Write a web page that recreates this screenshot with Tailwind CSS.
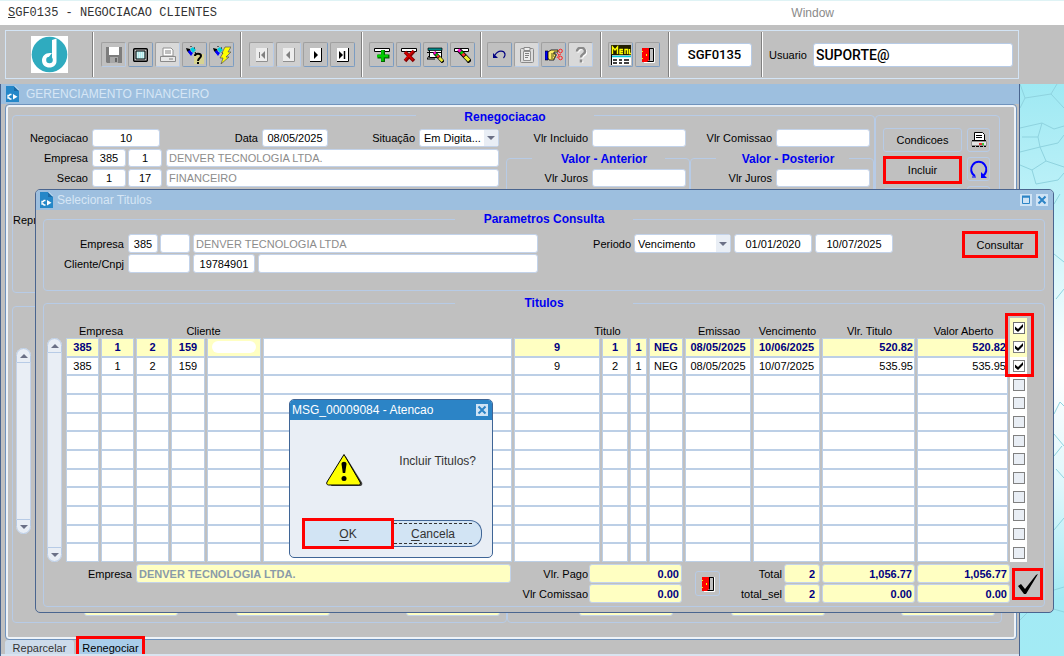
<!DOCTYPE html>
<html lang="pt-BR">
<head>
    <meta charset="UTF-8">
    <meta name="viewport" content="width=device-width, initial-scale=1.0">
    <title>SGF0135 - NEGOCIACAO CLIENTES</title>
    <script src="https://cdn.jsdelivr.net/npm/@tailwindcss/browser@4"></script>
</head>
<body class="relative flex h-screen flex-col overflow-hidden bg-[#a3ebf4] font-['Liberation_Sans',Arial,sans-serif] text-[11px] leading-[14px] text-black">

    <!-- Shared symbols -->
    <svg class="hidden">
        <symbol id="app-icon" viewBox="0 0 13 16">
            <path d="M0 0h8l5 5v11H0z" fill="#2487c8"/>
            <path d="M8 0l5 5H8z" fill="#1a6ba8"/>
            <path d="M8.500 0l4.500 4.500" stroke="#cfe6f7" stroke-width="1"/>
            <path d="M7 8l4.500 2.800L7 13.500z" fill="#fff"/>
            <path d="M5.500 8.500H4l-.8 1H2v2.500h1.200l.8 1h1.500" fill="none" stroke="#fff" stroke-width="1.300"/>
        </symbol>
        <symbol id="door" viewBox="0 0 14 16">
            <path d="M13.500 1v14.500H3" stroke="#fff" fill="none"/>
            <path d="M1.500 1.500h11v13h-11z" fill="#c0c0c0" stroke="#000"/>
            <path d="M1 1h7v12l-2 2H1z" fill="#f00"/>
            <path d="M8.500 1v12.500" stroke="#000"/>
            <path d="M5 7h1v2H5zM1 4h1v1H1zM1 11h1v1H1z" fill="#ff0"/>
        </symbol>
        <symbol id="up" viewBox="0 0 8 4"><path d="M0 4L4 0l4 4z" fill="#6b7086"/></symbol>
        <symbol id="down" viewBox="0 0 8 4"><path d="M0 0l4 4 4-4z" fill="#6b7086"/></symbol>
        <symbol id="flash" viewBox="0 0 10 10">
            <path d="M0 2l4 1 1 4-1 1-3-3z" fill="#000"/>
            <path d="M4 3l3-2 3 3-3 3z" fill="#0cd"/>
            <path d="M3 4l4 3-2 3-3-4z" fill="#00f"/>
            <path d="M4 0h2M9 6l1 2M8 2h1" stroke="#000"/>
        </symbol>
        <symbol id="pencil" viewBox="0 0 16 16">
            <path d="M3 2l10 10.500 2 2.500" stroke="#000" stroke-width="5"/>
            <path d="M2.500 1.500L5 4" stroke="#f0c" stroke-width="3"/>
            <path d="M5 4l2.500 2.500" stroke="#0c0" stroke-width="3"/>
            <path d="M7 6l2 2.300" stroke="#f33" stroke-width="3"/>
            <path d="M9.500 9L14 13.500" stroke="#ee3" stroke-width="3.500"/>
        </symbol>
        <symbol id="tick" viewBox="0 0 8 8"><path d="M0 2.500l3 2.500 5-5v3L3 8 0 5.500z" fill="#000"/></symbol>
        <symbol id="close" viewBox="0 0 12 12">
            <path d="M0 0h12v12H0z" fill="#cfe3f5"/>
            <path d="M2.500 2.500l7 7m0-7l-7 7" stroke="#2c84c6" stroke-width="2"/>
        </symbol>
    </svg>

    <!-- Desktop wallpaper -->
    <svg class="absolute top-[84px] right-0 h-[calc(100%-84px)] w-[54px]" viewBox="0 0 54 572" preserveAspectRatio="none">
        <defs>
            <linearGradient id="wall" x1="0" y1="0" x2="0" y2="1">
                <stop offset="0" stop-color="#9fe9f3"/><stop offset=".2" stop-color="#bdf1f8"/><stop offset=".5" stop-color="#ffffff"/>
                <stop offset=".7" stop-color="#dff7fb"/><stop offset=".9" stop-color="#a3eaf5"/><stop offset="1" stop-color="#a3ebf4"/>
            </linearGradient>
        </defs>
        <path d="M0 0h54v572H0z" fill="url(#wall)"/>
        <path d="M10 0l5 14 26-4 6-10M41 10l13 14M15 14l-5 10M10 44l22-5 12 6 10-3M12 53h16l4-14M28 53l2 10 18-4 6-8M10 68l20-5 6 14-14 9-12-5M36 77l18 6M22 86l4 14 22-4 6-7M44 120l6-10M44 170l10 8M46 215l8-10M44 330l6-12 4 4M44 350l10 12M44 372l8-10M46 385l8 9M44 446l10-12M10 536l16-16-2-22 20 8 10-3M24 498l-12-14M26 520l28 8M26 520l-6-16" fill="none" stroke="#8fd3df" stroke-width="1"/>
    </svg>

    <!-- Menu bar -->
    <header class="relative flex h-[25px] shrink-0 items-center border-t border-[#dff3f5] bg-white px-2">
        <h1 class="font-['Liberation_Mono',monospace] text-[12px] text-[#333]"><span class="underline">S</span>GF0135 - NEGOCIACAO CLIENTES</h1>
        <button class="mr-[222px] ml-auto text-[12px] text-[#8a8a8a]">Window</button>
    </header>

    <!-- Toolbar -->
    <div class="relative h-[59px] shrink-0 bg-[#c0c0c0] pt-[5px] pr-[45px] pl-[5px]">
        <div class="flex h-[49px] border border-[#d3e4f5] py-px">
            <div class="flex w-[87px] items-center justify-center border-r border-[#808080]">
                <svg class="h-[37px] w-[37px]" viewBox="0 0 37 37">
                    <path d="M0 0h37v37H0z" fill="#fff"/>
                    <circle cx="18.500" cy="18.500" r="17.800" fill="#2fabbf"/>
                    <path d="M21 4l4.500-1.500V25c0 4-3 6.500-7 6.500s-7.500-2.500-7.500-7c0-4 3-7.500 8-7.500 1.500 0 2 .2 2 .2z" fill="#fff"/>
                    <circle cx="18.500" cy="24" r="3.300" fill="#2fabbf"/>
                    <path d="M17 22l4-5v6z" fill="#2fabbf"/>
                </svg>
            </div>

            <div class="flex w-[148px] items-center gap-[2px] border-r border-l border-r-[#808080] border-l-white pl-[7px]">
                <button aria-label="Salvar" class="flex h-[25px] w-[25px] items-center justify-center rounded-[2px] border border-t-[#a0a0a0] border-r-[#b7cbe6] border-b-[#b7cbe6] border-l-[#a0a0a0]">
                    <svg class="h-4 w-4" viewBox="0 0 16 16"><path d="M0 0h16v16H1l-1-1z" fill="#7d7d7d"/><path d="M3 0h10v8H3z" fill="#fff"/><path d="M4 10h8v6H4z" fill="#a8a8a8"/><path d="M9 11h2v4H9z" fill="#666"/></svg>
                </button>
                <button aria-label="Tela" class="flex h-[25px] w-[25px] items-center justify-center rounded-[2px] border border-t-[#a0a0a0] border-r-[#7b9cc2] border-b-[#7b9cc2] border-l-[#a0a0a0]">
                    <svg class="h-[14px] w-[15px]" viewBox="0 0 15 14"><rect x=".7" y=".7" width="13.600" height="12.600" rx="1" fill="#c0c0c0" stroke="#000" stroke-width="1.400"/><path d="M3 3h9v8H3z" fill="#aee9ea" stroke="#000"/><path d="M4 5h7M4 7h7M4 9h7" stroke="#fff" stroke-dasharray="1 1"/></svg>
                </button>
                <button aria-label="Imprimir" class="flex h-[25px] w-[25px] items-center justify-center rounded-[2px] border border-t-[#a0a0a0] border-r-[#b7cbe6] border-b-[#b7cbe6] border-l-[#a0a0a0] bg-[#d9d9d9]">
                    <svg class="h-4 w-4" viewBox="0 0 16 16"><path d="M3 1h8l2 2v6H3z" fill="#fff" stroke="#909090"/><path d="M5 4h6M5 6h6" stroke="#808080"/><path d="M.5 9.500h15v5H.5z" fill="#e8e8e8" stroke="#8a8a8a"/><path d="M9 12h4" stroke="#808080"/></svg>
                </button>
                <button aria-label="Entrar consulta" class="flex h-[25px] w-[25px] items-center justify-center rounded-[2px] border border-t-[#a0a0a0] border-r-[#7b9cc2] border-b-[#7b9cc2] border-l-[#a0a0a0]">
                    <svg class="h-[18px] w-[18px]" viewBox="0 0 18 18"><use href="#flash" width="10" height="10"/><path d="M8 8h10v10H8z" fill="#e6e070" opacity=".6"/><path d="M9 10c0-3 6-3 6 0 0 2-3 2-3 5m0 1v2" fill="none" stroke="#000" stroke-width="2"/></svg>
                </button>
                <button aria-label="Executar consulta" class="flex h-[25px] w-[25px] items-center justify-center rounded-[2px] border border-t-[#a0a0a0] border-r-[#7b9cc2] border-b-[#7b9cc2] border-l-[#a0a0a0]">
                    <svg class="h-[18px] w-[18px]" viewBox="0 0 18 18"><use href="#flash" width="10" height="10"/><path d="M12 1h6l-3 5h3l-5 5h3l-8 7 2-6H7l3-5H9z" fill="#ff0" stroke="#555" stroke-width=".7"/></svg>
                </button>
            </div>

            <div class="flex w-[121px] items-center gap-[2px] border-r border-l border-r-[#808080] border-l-white pl-[7px]">
                <button aria-label="Primeiro" class="flex h-[25px] w-[25px] items-center justify-center rounded-[2px] border border-t-[#a0a0a0] border-r-[#b7cbe6] border-b-[#b7cbe6] border-l-[#a0a0a0] bg-[#d0d0d0]">
                    <svg class="h-[14px] w-[12px]" viewBox="0 0 12 14"><path d="M0 0h12v14H0z" fill="#ededed"/><path d="M11.500 0v13.500H0" fill="none" stroke="#909090"/><path d="M3.500 4v6" stroke="#808080"/><path d="M9 3v8L5 7z" fill="#808080"/></svg>
                </button>
                <button aria-label="Anterior" class="flex h-[25px] w-[25px] items-center justify-center rounded-[2px] border border-t-[#a0a0a0] border-r-[#b7cbe6] border-b-[#b7cbe6] border-l-[#a0a0a0] bg-[#d0d0d0]">
                    <svg class="h-[14px] w-[12px]" viewBox="0 0 12 14"><path d="M0 0h12v14H0z" fill="#ededed"/><path d="M11.500 0v13.500H0" fill="none" stroke="#909090"/><path d="M7 3v8L3 7z" fill="#808080"/></svg>
                </button>
                <button aria-label="Proximo" class="flex h-[25px] w-[25px] items-center justify-center rounded-[2px] border border-t-[#a0a0a0] border-r-[#7b9cc2] border-b-[#7b9cc2] border-l-[#a0a0a0]">
                    <svg class="h-[14px] w-[12px]" viewBox="0 0 12 14"><path d="M0 0h12v14H0z" fill="#fff"/><path d="M11.500 0v13.500H0" fill="none" stroke="#000"/><path d="M4 3v8l4-4z" fill="#000"/></svg>
                </button>
                <button aria-label="Ultimo" class="flex h-[25px] w-[25px] items-center justify-center rounded-[2px] border border-t-[#a0a0a0] border-r-[#7b9cc2] border-b-[#7b9cc2] border-l-[#a0a0a0]">
                    <svg class="h-[14px] w-[12px]" viewBox="0 0 12 14"><path d="M0 0h12v14H0z" fill="#fff"/><path d="M11.500 0v13.500H0" fill="none" stroke="#000"/><path d="M2 3v8l4-4z" fill="#000"/><path d="M7.500 3v8" stroke="#000" stroke-width="1.500"/></svg>
                </button>
            </div>

            <div class="flex w-[119px] items-center gap-[2px] border-r border-l border-r-[#808080] border-l-white pl-[6px]">
                <button aria-label="Inserir" class="flex h-[25px] w-[25px] items-center justify-center rounded-[2px] border border-t-[#a0a0a0] border-r-[#7b9cc2] border-b-[#7b9cc2] border-l-[#a0a0a0]">
                    <svg class="h-4 w-4" viewBox="0 0 16 16"><path d="M.5 1.500h15v3H.5z" fill="#fff" stroke="#000"/><path d="M9 3v12M3.500 9.500h12" stroke="#060" stroke-width="4"/><path d="M8.500 3v11M3 9h11" stroke="#0c0" stroke-width="2.500"/></svg>
                </button>
                <button aria-label="Remover" class="flex h-[25px] w-[25px] items-center justify-center rounded-[2px] border border-t-[#a0a0a0] border-r-[#7b9cc2] border-b-[#7b9cc2] border-l-[#a0a0a0]">
                    <svg class="h-4 w-4" viewBox="0 0 16 16"><path d="M.5 1.500h15v3H.5z" fill="#fff" stroke="#000"/><path d="M4 5l9 9M13 4l-9 10" stroke="#800" stroke-width="3.500"/><path d="M4 5l8 8M12 4l-8 9" stroke="#d00" stroke-width="1.500"/></svg>
                </button>
                <button aria-label="Limpar bloco" class="flex h-[25px] w-[25px] items-center justify-center rounded-[2px] border border-t-[#a0a0a0] border-r-[#7b9cc2] border-b-[#7b9cc2] border-l-[#a0a0a0]">
                    <svg class="h-4 w-[17px]" viewBox="0 0 17 16"><path d="M2.500 1.500h12v9h-12z" fill="#fff" stroke="#000"/><path d="M1 1h14v2.500H1z" fill="#088" stroke="#000" stroke-width=".7"/><path d="M0 5.500h14M2 9l-2 3h8" stroke="#000" fill="none"/><use href="#pencil" x="5" y="4" width="12" height="12"/></svg>
                </button>
                <button aria-label="Limpar registro" class="flex h-[25px] w-[25px] items-center justify-center rounded-[2px] border border-t-[#a0a0a0] border-r-[#7b9cc2] border-b-[#7b9cc2] border-l-[#a0a0a0]">
                    <svg class="h-[17px] w-[17px]" viewBox="0 0 17 17"><path d="M.5 2.500h14v3H.5z" fill="#fff" stroke="#000"/><use href="#pencil" x="2" y="2" width="15" height="15"/></svg>
                </button>
            </div>

            <div class="flex w-[120px] items-center gap-[2px] border-r border-l border-r-[#808080] border-l-white pl-[5px]">
                <button aria-label="Desfazer" class="flex h-[25px] w-[25px] items-center justify-center rounded-[2px] border border-t-[#a0a0a0] border-r-[#7b9cc2] border-b-[#7b9cc2] border-l-[#a0a0a0]">
                    <svg class="h-[9px] w-[13px]" viewBox="0 0 13 9"><path d="M2 5c3-5 9-5 10-1 .3 2-.5 3-1.500 4" fill="none" stroke="#000080" stroke-width="1.200"/><path d="M0 3v5h5z" fill="#000080"/></svg>
                </button>
                <button aria-label="Colar" class="flex h-[25px] w-[25px] items-center justify-center rounded-[2px] border border-t-[#a0a0a0] border-r-[#b7cbe6] border-b-[#b7cbe6] border-l-[#a0a0a0] bg-[#d9d9d9]">
                    <svg class="h-4 w-[14px]" viewBox="0 0 14 16"><rect x=".5" y="1.500" width="13" height="14" rx="1" fill="#ddd" stroke="#8a8a8a"/><path d="M4 .5h6v3H4z" fill="#eee" stroke="#8a8a8a"/><path d="M3.500 4.500h7v9h-7z" fill="#eee" stroke="#909090"/><path d="M5 6.500h4M5 8.500h4M5 10.500h3" stroke="#808080"/></svg>
                </button>
                <button aria-label="Selecionar" class="flex h-[25px] w-[25px] items-center justify-center rounded-[2px] border border-t-[#a0a0a0] border-r-[#7b9cc2] border-b-[#7b9cc2] border-l-[#a0a0a0]">
                    <svg class="h-[14px] w-[18px]" viewBox="0 0 18 14"><path d="M0 3h3v9H0z" fill="#00f" stroke="#000" stroke-width=".6"/><path d="M3 4l3-2h7v2H9v2h2v2h-1v2H9v2H4l-1-2z" fill="#fe6" stroke="#000" stroke-width=".8"/><path d="M6 6h3M6 8h3M6 10h2" stroke="#000" stroke-width=".7"/><path d="M12 5l2 2 2-1M12 10l2-3" stroke="#f33" fill="none"/><circle cx="15.500" cy="3" r="1.800" stroke="#f22" fill="none"/><circle cx="15.500" cy="10" r="1.800" stroke="#f22" fill="none"/></svg>
                </button>
                <button aria-label="Ajuda" class="flex h-[25px] w-[25px] items-center justify-center rounded-[2px] border border-t-[#a0a0a0] border-r-[#b7cbe6] border-b-[#b7cbe6] border-l-[#a0a0a0] bg-[#d9d9d9]">
                    <svg class="h-4 w-3" viewBox="0 0 12 16"><path d="M3 5.500c0-5 8-5 8 0 0 3-4 2-4 6m0 2v3" fill="none" stroke="#fff" stroke-width="2.500"/><path d="M2 4.500c0-5 8-5 8 0 0 3-4 2-4 6m0 2v3" fill="none" stroke="#8a8a8a" stroke-width="2.500"/></svg>
                </button>
            </div>

            <div class="flex w-[68px] items-center gap-[2px] border-r border-l border-r-[#808080] border-l-white pl-[6px]">
                <button aria-label="Menu" class="flex h-[25px] w-[25px] items-center justify-center rounded-[2px] border border-t-[#a0a0a0] border-r-[#7b9cc2] border-b-[#7b9cc2] border-l-[#a0a0a0]">
                    <svg class="h-5 w-5" viewBox="0 0 20 20"><path d="M0 0h20v10H0z" fill="#221f00"/><path d="M1.500 9V2L4 5l2.500-3v7M12 4.500H9v4h3M9 6.500h3M14 9V4.500h2.500V9M18.500 4v4.500H20" stroke="#ff0" fill="none" stroke-width="1.400"/><path d="M0 11h20v9H0z" fill="#fff"/><path d="M0 11.500h20" stroke="#0cd" stroke-width="1.500"/><path d="M2 15h4m2 0h3m2 0h5M2 18h4m2 0h3m2 0h5" stroke="#000" stroke-width="1.300"/><path d="M.5 10v10" stroke="#000"/></svg>
                </button>
                <button aria-label="Sair" class="flex h-[25px] w-[25px] items-center justify-center rounded-[2px] border border-t-[#a0a0a0] border-r-[#7b9cc2] border-b-[#7b9cc2] border-l-[#a0a0a0]">
                    <svg class="h-4 w-[14px]"><use href="#door"/></svg>
                </button>
            </div>

            <div class="flex w-[93px] items-center border-r border-l border-r-[#808080] border-l-white pl-[7px]">
                <input aria-label="Programa" value="SGF0135" class="h-6 w-[75px] rounded-[3px] border border-[#b7cbe6] bg-white text-center font-[Roboto,sans-serif] text-[13px] font-medium">
            </div>

            <div class="flex flex-1 items-center gap-[6px] border-l border-white pr-[5px] pl-[6px]">
                <label for="usuario">Usuario</label>
                <input id="usuario" value="SUPORTE@" class="h-6 min-w-0 flex-1 rounded-[3px] border border-[#b7cbe6] bg-white px-[2px] font-[Roboto,sans-serif] text-[14px] font-medium">
            </div>
        </div>
    </div>

    <!-- Main window -->
    <main class="relative mr-[44px] flex min-h-0 flex-1 flex-col border-x border-x-[#4a658f] bg-[#c0c0c0]">
        <div class="flex h-5 shrink-0 items-center gap-[7px] bg-[#9dbfdf] pl-[5px]">
            <svg class="h-4 w-[13px]"><use href="#app-icon"/></svg>
            <h2 class="text-[12px] text-[#d6e6f5]">GERENCIAMENTO FINANCEIRO</h2>
        </div>

        <div class="mr-[2px] ml-[4px] flex min-h-0 flex-1 flex-col rounded-[4px] border border-[#6f93bd] pt-[3px] pr-[14px] pl-[6px] shadow-[inset_0_0_0_2px_#eef3f8]">
            <div class="mr-[2px] flex">
                <fieldset class="h-[185px] min-w-0 flex-1 rounded-[4px] border border-[#b7cbe6]">
                    <legend class="ml-[403px] h-[14px] w-[178px] pt-[2px] text-[12px] font-bold text-[#0000f0]"><span class="block text-center">Renegociacao</span></legend>
                    <div class="flex pt-[7px]">
                        <div class="flex w-[486px] flex-col gap-[2px]">
                            <div class="flex items-center gap-1">
                                <label for="negociacao" class="w-[75px] text-right">Negociacao</label>
                                <input id="negociacao" value="10" class="h-[18px] w-[68px] rounded-[3px] border border-[#c3d3ea] bg-white text-center">
                                <label for="data" class="w-[94px] text-right">Data</label>
                                <input id="data" value="08/05/2025" class="h-[18px] w-[66px] rounded-[3px] border border-[#c3d3ea] bg-white text-center">
                                <label for="situacao" class="w-[83px] text-right">Situação</label>
                                <div class="relative flex-1">
                                    <select id="situacao" class="block h-[18px] w-full appearance-none rounded-[3px] border border-[#c3d3ea] bg-white pl-1"><option>Em Digita...</option></select>
                                    <span class="pointer-events-none absolute inset-y-px right-px flex w-[14px] items-center justify-center bg-[#e9eef5]"><svg class="h-1 w-2"><use href="#down"/></svg></span>
                                </div>
                            </div>
                            <div class="flex items-center gap-1">
                                <label for="emp1" class="w-[75px] text-right">Empresa</label>
                                <div class="flex gap-[2px]">
                                    <input id="emp1" value="385" class="h-[18px] w-[34px] rounded-[3px] border border-[#c3d3ea] bg-white text-center">
                                    <input aria-label="Filial" value="1" class="h-[18px] w-[34px] rounded-[3px] border border-[#c3d3ea] bg-white text-center">
                                </div>
                                <input aria-label="Nome da empresa" value="DENVER TECNOLOGIA LTDA." class="h-[18px] min-w-0 flex-1 rounded-[3px] border border-[#c3d3ea] bg-white px-[2px] text-[#8c8c8c]">
                            </div>
                            <div class="flex items-center gap-1">
                                <label for="secao" class="w-[75px] text-right">Secao</label>
                                <div class="flex gap-[2px]">
                                    <input id="secao" value="1" class="h-[18px] w-[34px] rounded-[3px] border border-[#c3d3ea] bg-white text-center">
                                    <input aria-label="Subsecao" value="17" class="h-[18px] w-[34px] rounded-[3px] border border-[#c3d3ea] bg-white text-center">
                                </div>
                                <input aria-label="Nome da secao" value="FINANCEIRO" class="h-[18px] min-w-0 flex-1 rounded-[3px] border border-[#c3d3ea] bg-white px-[2px] text-[#8c8c8c]">
                            </div>
                            <p class="pt-6">Representante</p>
                        </div>

                        <div class="ml-[7px] grid flex-1 grid-cols-2">
                            <div>
                                <div class="flex items-center justify-end gap-1 pr-1">
                                    <label for="vlr-incluido">Vlr Incluido</label>
                                    <input id="vlr-incluido" class="h-[18px] w-[94px] rounded-[3px] border border-[#c3d3ea] bg-white px-1">
                                </div>
                                <fieldset class="mt-1 h-[120px] rounded-[4px] border border-[#b7cbe6]">
                                    <legend class="mx-auto h-[14px] w-[133px] pl-3 pt-px text-center text-[12px] font-bold text-[#0000f0]">Valor - Anterior</legend>
                                    <div class="flex items-center justify-end gap-1 pt-[4px] pr-[3px]">
                                        <label for="juros-ant">Vlr Juros</label>
                                        <input id="juros-ant" class="h-[18px] w-[94px] rounded-[3px] border border-[#c3d3ea] bg-white px-1">
                                    </div>
                                </fieldset>
                            </div>
                            <div>
                                <div class="flex items-center justify-end gap-1 pr-1">
                                    <label for="vlr-comissao">Vlr Comissao</label>
                                    <input id="vlr-comissao" class="h-[18px] w-[94px] rounded-[3px] border border-[#c3d3ea] bg-white px-1">
                                </div>
                                <fieldset class="mt-1 h-[120px] rounded-[4px] border border-[#b7cbe6]">
                                    <legend class="mx-auto h-[14px] w-[133px] pl-3 pt-px text-center text-[12px] font-bold text-[#0000f0]">Valor - Posterior</legend>
                                    <div class="flex items-center justify-end gap-1 pt-[4px] pr-[3px]">
                                        <label for="juros-post">Vlr Juros</label>
                                        <input id="juros-post" class="h-[18px] w-[94px] rounded-[3px] border border-[#c3d3ea] bg-white px-1">
                                    </div>
                                </fieldset>
                            </div>
                        </div>
                    </div>
                </fieldset>

                <div class="mt-[7px] flex w-[125px] items-start gap-[5px] rounded-[4px] border border-[#b7cbe6] pt-[12px] pl-[7px]">
                    <div class="flex w-[79px] flex-col gap-[4px]">
                        <button class="h-6 rounded-[3px] border border-[#b7cbe6]">Condicoes</button>
                        <button class="h-7 border-[3px] border-[#f00]">Incluir</button>
                        <button aria-label="Excluir" class="h-6 rounded-[3px] border border-[#b7cbe6]"></button>
                    </div>
                    <div class="flex w-[23px] flex-col gap-[5px]">
                        <button aria-label="Imprimir negociacao" class="flex h-6 items-center justify-center rounded-[3px] border border-[#b7cbe6]">
                            <svg class="h-4 w-4" viewBox="0 0 16 16"><path d="M3.500 .5h8l2 2v6h-10z" fill="#fff" stroke="#000"/><path d="M5 3.500h6M5 5.500h6" stroke="#000"/><path d="M.5 9.500h15v4H.5z" fill="#e4e4e4" stroke="#909090"/><path d="M8 11h3v2H8z" fill="#e33"/><path d="M11 11h2v2h-2z" fill="#3c3"/><path d="M1 8.500h14" stroke="#000"/><path d="M1 14.500h14" stroke="#000" stroke-dasharray="3 1"/></svg>
                        </button>
                        <button aria-label="Atualizar" class="flex h-6 items-center justify-center rounded-[3px] border border-[#b7cbe6]">
                            <svg class="h-[19px] w-[19px]" viewBox="0 0 19 19"><path d="M6 16A7.600 7.600 0 1 1 13.500 16" fill="none" stroke="#00f" stroke-width="2"/><path d="M12 12v6h6z" fill="#00f"/><path d="M3 17h4" fill="none" stroke="#00f"/></svg>
                        </button>
                        <button aria-label="Detalhes" class="h-6 rounded-[3px] border border-[#b7cbe6]"></button>
                    </div>
                </div>
            </div>

            <div class="mt-[13px] mb-4 flex flex-1">
                <div class="flex flex-1 items-end justify-end rounded-[4px] border border-[#b7cbe6] pr-[6px] pb-[6px]">
                    <div class="mt-[41px] mr-auto ml-[3px] flex w-[15px] flex-col self-start rounded-full bg-[#e9eef5]">
                        <button aria-label="Subir" class="flex h-[15px] items-center justify-center rounded-t-full border border-[#b7cbe6]"><svg class="h-1 w-2"><use href="#up"/></svg></button>
                        <span class="h-[156px] border-x border-[#c3d3ea]"></span>
                        <button aria-label="Descer" class="flex h-[15px] items-center justify-center rounded-b-full border border-[#b7cbe6]"><svg class="h-1 w-2"><use href="#down"/></svg></button>
                    </div>
                    <div class="flex gap-[58px]">
                        <input aria-label="Total 1" class="h-[18px] w-[94px] rounded-[3px] border border-[#c3d3ea] bg-[#ffffc2]">
                        <input aria-label="Total 2" class="mr-[18px] h-[18px] w-[94px] rounded-[3px] border border-[#c3d3ea] bg-[#ffffc2]">
                        <input aria-label="Total 3" class="h-[18px] w-[94px] rounded-[3px] border border-[#c3d3ea] bg-[#ffffc2]">
                    </div>
                </div>
                <div class="flex flex-1 items-end justify-end gap-[58px] rounded-[4px] border border-[#b7cbe6] pr-[6px] pb-[6px]">
                    <input aria-label="Total 4" class="h-[18px] w-[94px] rounded-[3px] border border-[#c3d3ea] bg-[#ffffc2]">
                    <input aria-label="Total 5" class="mr-[18px] h-[18px] w-[94px] rounded-[3px] border border-[#c3d3ea] bg-[#ffffc2]">
                    <input aria-label="Total 6" class="h-[18px] w-[94px] rounded-[3px] border border-[#c3d3ea] bg-[#ffffc2]">
                </div>
            </div>
        </div>

        <!-- Tabs -->
        <nav class="flex h-4 shrink-0 items-end gap-[2px] border-b-2 border-[#d9e4f0] pl-[4px] leading-[12px]">
            <button class="h-[14px] w-[69px] rounded-t-[3px] bg-[#cddbea] pt-[2px] text-[#333]">Reparcelar</button>
            <button class="h-[18px] w-[69px] border-[3px] border-b-0 border-[#f00] bg-[#a9cdea] pt-[3px]">Renegociar</button>
        </nav>
    </main>

    <!-- Selecionar Titulos -->
    <section class="absolute top-[189px] right-[10px] left-[35px] rounded-[5px] border border-[#4a658f] bg-[#c0c0c0]">
        <div class="flex h-5 items-center gap-[4px] rounded-t-[4px] bg-[#9dbfdf] pr-[5px] pl-[4px]">
            <svg class="h-4 w-[13px]"><use href="#app-icon"/></svg>
            <h2 class="text-[12px] text-[#d6e6f5]">Selecionar Titulos</h2>
            <button aria-label="Maximizar" class="ml-auto"><svg class="h-3 w-3" viewBox="0 0 12 12"><path d="M0 0h12v12H0z" fill="#cfe3f5"/><path d="M2.500 3h7v6.500h-7z" fill="none" stroke="#2c84c6"/><path d="M2 2.500h8" stroke="#2c84c6" stroke-width="2"/></svg></button>
            <button aria-label="Fechar"><svg class="h-3 w-3"><use href="#close"/></svg></button>
        </div>

        <div class="pt-[2px] pr-[8px] pb-[5px] pl-[7px]">
            <fieldset class="h-[79px] rounded-[4px] border border-[#b7cbe6]">
                <legend class="mx-auto h-[14px] w-[178px] text-center text-[12px] font-bold text-[#0000f0]">Parametros Consulta</legend>
                <div class="flex items-start pr-[6px]">
                    <div class="mt-2 flex flex-1 flex-col gap-px">
                        <div class="flex items-center">
                            <label for="emp2" class="mr-1 w-[80px] text-right">Empresa</label>
                            <div class="mr-[3px] flex w-[62px] gap-[2px]">
                                <input id="emp2" value="385" class="h-[19px] w-[30px] rounded-[3px] border border-[#c3d3ea] bg-white text-center">
                                <input aria-label="Filial" class="h-[19px] w-[30px] rounded-[3px] border border-[#c3d3ea] bg-white text-center">
                            </div>
                            <input aria-label="Nome da empresa" value="DENVER TECNOLOGIA LTDA" class="h-[19px] min-w-0 flex-1 rounded-[3px] border border-[#c3d3ea] bg-white px-[2px] text-[#8c8c8c]">
                        </div>
                        <div class="flex items-center">
                            <label for="cnpj" class="mr-1 w-[80px] text-right">Cliente/Cnpj</label>
                            <input id="cnpj" class="mr-[3px] h-[19px] w-[62px] rounded-[3px] border border-[#c3d3ea] bg-white text-center">
                            <input aria-label="Cnpj" value="19784901" class="mr-[3px] h-[19px] w-[62px] rounded-[3px] border border-[#c3d3ea] bg-white text-center">
                            <input aria-label="Nome do cliente" class="h-[19px] min-w-0 flex-1 rounded-[3px] border border-[#c3d3ea] bg-white px-[2px]">
                        </div>
                    </div>
                    <div class="mt-2 ml-[55px] flex items-center gap-[3px]">
                        <label for="periodo">Periodo</label>
                        <div class="relative w-[97px]">
                            <select id="periodo" class="block h-[19px] w-full appearance-none rounded-[3px] border border-[#c3d3ea] bg-white pl-[3px]"><option>Vencimento</option></select>
                            <span class="pointer-events-none absolute inset-y-px right-px flex w-[14px] items-center justify-center bg-[#e9eef5]"><svg class="h-1 w-2"><use href="#down"/></svg></span>
                        </div>
                        <input aria-label="Data inicial" value="01/01/2020" class="h-[19px] w-[78px] rounded-[3px] border border-[#c3d3ea] bg-white text-center">
                        <input aria-label="Data final" value="10/07/2025" class="h-[19px] w-[78px] rounded-[3px] border border-[#c3d3ea] bg-white text-center">
                    </div>
                    <button class="mt-[5px] ml-[69px] h-[27px] w-[76px] border-[3px] border-[#f00]">Consultar</button>
                </div>
            </fieldset>

            <fieldset class="mt-[5px] rounded-[4px] border border-[#b7cbe6] pb-[3px]">
                <legend class="mx-auto h-[14px] w-[178px] text-center text-[12px] font-bold text-[#0000f0]">Titulos</legend>
                <div class="flex pt-2 pr-[17px] pl-[3px]">
                    <div class="mt-5 mr-[4px] flex w-[15px] flex-col rounded-full bg-[#e9eef5]">
                        <button aria-label="Subir" class="flex h-[15px] items-center justify-center rounded-t-full border border-[#b7cbe6]"><svg class="h-1 w-2"><use href="#up"/></svg></button>
                        <span class="flex-1 border-x border-[#c3d3ea]"></span>
                        <button aria-label="Descer" class="flex h-[15px] items-center justify-center rounded-b-full border border-[#b7cbe6]"><svg class="h-1 w-2"><use href="#down"/></svg></button>
                    </div>
                    <div class="relative flex-1">
                        <table class="h-[244px] w-full table-fixed border-separate border-spacing-0">
                            <colgroup>
                                <col class="w-[35px]"><col class="w-[35px]"><col class="w-[35px]"><col class="w-[36px]"><col class="w-[56px]"><col>
                                <col class="w-[88px]"><col class="w-[28px]"><col class="w-[19px]"><col class="w-[36px]"><col class="w-[68px]"><col class="w-[69px]">
                                <col class="w-[95px]"><col class="w-[93px]"><col class="w-[17px]">
                            </colgroup>
                            <thead>
                                <tr class="h-5 align-bottom">
                                    <th colspan="2" class="p-0 font-normal">Empresa</th>
                                    <th colspan="3" class="p-0 pl-2 font-normal">Cliente</th>
                                    <th class="p-0"></th>
                                    <th colspan="4" class="p-0 pl-4 font-normal">Titulo</th>
                                    <th class="p-0 font-normal">Emissao</th>
                                    <th class="p-0 font-normal">Vencimento</th>
                                    <th class="p-0 font-normal">Vlr. Titulo</th>
                                    <th class="p-0 font-normal">Valor Aberto</th>
                                    <th class="bg-[#ffffc2] p-0 align-middle">
                                        <span class="relative ml-[3px] block h-3 w-3">
                                            <input type="checkbox" checked aria-label="Marcar todos" class="block h-3 w-3 appearance-none border border-[#707070] bg-white">
                                            <svg class="pointer-events-none absolute top-[2px] left-[2px] h-2 w-2"><use href="#tick"/></svg>
                                        </span>
                                    </th>
                                </tr>
                            </thead>
                            <tbody id="titulos"></tbody>
                        </table>
                        <div class="pointer-events-none absolute -top-[5px] -right-[7px] h-16 w-[29px] border-[3px] border-[#f00]"></div>
                    </div>
                </div>

                <!-- Totals -->
                <div class="mt-[2px] flex pr-px">
                    <div class="flex h-[19px] flex-1 items-center gap-1">
                        <label for="empresa-nome" class="w-[88px] text-right">Empresa</label>
                        <input id="empresa-nome" value="DENVER TECNOLOGIA LTDA." class="h-[19px] min-w-0 flex-1 rounded-[3px] border border-[#c3d3ea] bg-[#ffffc2] px-[2px] font-bold text-[#8a9ba8]">
                    </div>
                    <div class="flex flex-col gap-px">
                        <div class="flex items-center gap-px">
                            <label for="vlr-pago" class="w-[77px] text-right">Vlr. Pago</label>
                            <input id="vlr-pago" value="0.00" class="h-[19px] w-[93px] rounded-[3px] border border-[#c3d3ea] bg-[#ffffc2] px-[2px] text-right font-bold text-[#000080]">
                        </div>
                        <div class="flex items-center gap-px">
                            <label for="comissao" class="w-[77px] text-right">Vlr Comissao</label>
                            <input id="comissao" value="0.00" class="h-[19px] w-[93px] rounded-[3px] border border-[#c3d3ea] bg-[#ffffc2] px-[2px] text-right font-bold text-[#000080]">
                        </div>
                    </div>
                    <button aria-label="Sair" class="ml-[13px] flex h-[25px] w-[25px] items-center justify-center self-center rounded-[3px] border border-[#b7cbe6]"><svg class="h-4 w-[14px]"><use href="#door"/></svg></button>
                    <div class="flex flex-col gap-px">
                        <div class="flex items-center gap-[2px]">
                            <label for="total" class="w-[62px] text-right">Total</label>
                            <input id="total" value="2" class="h-[19px] w-[36px] rounded-[3px] border border-[#c3d3ea] bg-[#ffffc2] px-[4px] text-right font-bold text-[#000080]">
                            <input aria-label="Total titulo" value="1,056.77" class="h-[19px] w-[93px] rounded-[3px] border border-[#c3d3ea] bg-[#ffffc2] px-[2px] text-right font-bold text-[#000080]">
                            <input aria-label="Total aberto" value="1,056.77" class="h-[19px] w-[93px] rounded-[3px] border border-[#c3d3ea] bg-[#ffffc2] px-[2px] text-right font-bold text-[#000080]">
                        </div>
                        <div class="flex items-center gap-[2px]">
                            <label for="total-sel" class="w-[62px] text-right">total_sel</label>
                            <input id="total-sel" value="2" class="h-[19px] w-[36px] rounded-[3px] border border-[#c3d3ea] bg-[#ffffc2] px-[4px] text-right font-bold text-[#000080]">
                            <input aria-label="Selecionado titulo" value="0.00" class="h-[19px] w-[93px] rounded-[3px] border border-[#c3d3ea] bg-[#ffffc2] px-[2px] text-right font-bold text-[#000080]">
                            <input aria-label="Selecionado aberto" value="0.00" class="h-[19px] w-[93px] rounded-[3px] border border-[#c3d3ea] bg-[#ffffc2] px-[2px] text-right font-bold text-[#000080]">
                        </div>
                    </div>
                    <button aria-label="Confirmar" class="ml-[2px] flex h-8 w-[31px] items-center justify-center self-center border-[3px] border-[#f00]">
                        <svg class="h-5 w-5" viewBox="0 0 20 20"><path d="M0 12l3-2 4 5L18 1l2-1L8 20H6z" fill="#000"/></svg>
                    </button>
                </div>
            </fieldset>
        </div>
    </section>

    <!-- Message -->
    <div role="alertdialog" aria-labelledby="msg-title" class="absolute top-[399px] left-[289px] h-[159px] w-[204px] rounded-[5px] border border-[#3f6596] bg-[#e9eef5]">
        <div class="flex h-5 items-center justify-between rounded-t-[4px] bg-[#2c84c6] pr-[4px] pl-[2px]">
            <h2 id="msg-title" class="text-[12px] text-white">MSG_00009084 - Atencao</h2>
            <button aria-label="Fechar mensagem"><svg class="h-3 w-3"><use href="#close"/></svg></button>
        </div>
        <div class="flex h-[98px] items-start justify-between pr-4 pl-9">
            <svg class="mt-[33px] h-[34px] w-[37px]" viewBox="0 0 37 34">
                <path d="M19.500 3L36 29.500c1 2-.5 3.500-2 3.500H5z" fill="#444"/>
                <path d="M18 1.500L1 29c-.8 1.500 0 3 1.500 3h30c1.500 0 2.500-1.500 1.500-3z" fill="#ff0" stroke="#000"/>
                <path d="M15.500 11c0-3 5-3 5 0l-1.300 9h-2.400z" fill="#000"/>
                <circle cx="18" cy="25.500" r="2.500" fill="#000"/>
            </svg>
            <p class="mt-[34px] text-[12px] text-[#333]">Incluir Titulos?</p>
        </div>
        <div class="flex items-center pl-[12px] text-[12px] text-[#333]">
            <button class="h-[31px] w-[92px] border-[3px] border-[#f00] bg-[#d2e4f4]"><span class="underline underline-offset-2">O</span>K</button>
            <button class="h-[27px] w-[88px] rounded-r-[12px] border border-l-0 border-[#3f6596] bg-[#d2e4f4] py-[2px]"><span class="mr-[9px] flex h-full items-center justify-center border-y border-dashed border-[#333]"><span class="underline underline-offset-2">C</span>ancela</span></button>
        </div>
    </div>

    <script>
        const titulos = [
            ['385', '1', '2', '159', '', '', '9', '1', '1', 'NEG', '08/05/2025', '10/06/2025', '520.82', '520.82'],
            ['385', '1', '2', '159', '', '', '9', '2', '1', 'NEG', '08/05/2025', '10/07/2025', '535.95', '535.95'],
        ];

        const body = document.getElementById('titulos');
        for (let i = 0; i < 12; i++) {
            const data = titulos[i] || Array(14).fill('');
            const current = i === 0;
            const cells = data.map((value, c) => `
                <td class="overflow-hidden whitespace-nowrap border-r-2 border-[#c0c0c0] shadow-[inset_0_0_0_1px_#bccfe6] ${c > 11 ? 'py-0 pr-[2px] pl-0 text-right' : 'p-0 text-center'} ${current && c !== 5 ? 'bg-[#ffffc2]' : 'bg-white'}">${current && c === 4 ? '<span class="mx-auto block h-3 w-11 rounded-full bg-white"></span>' : value}</td>`).join('');
            body.innerHTML += `
                <tr class="h-[18px] ${current ? 'font-bold text-[#000080]' : ''}">${cells}
                    <td class="p-0 ${current ? 'bg-[#ffffc2]' : 'bg-white'}">
                        <span class="relative ml-[3px] block h-3 w-3">
                            <input type="checkbox" aria-label="Titulo ${i + 1}" ${titulos[i] ? 'checked' : ''} class="block h-3 w-3 appearance-none border border-[#808080] bg-[#e9eef5] checked:bg-white">
                            ${titulos[i] ? '<svg class="pointer-events-none absolute top-[2px] left-[2px] h-2 w-2"><use href="#tick"/></svg>' : ''}
                        </span>
                    </td>
                </tr>`;
        }
    </script>
</body>
</html>
